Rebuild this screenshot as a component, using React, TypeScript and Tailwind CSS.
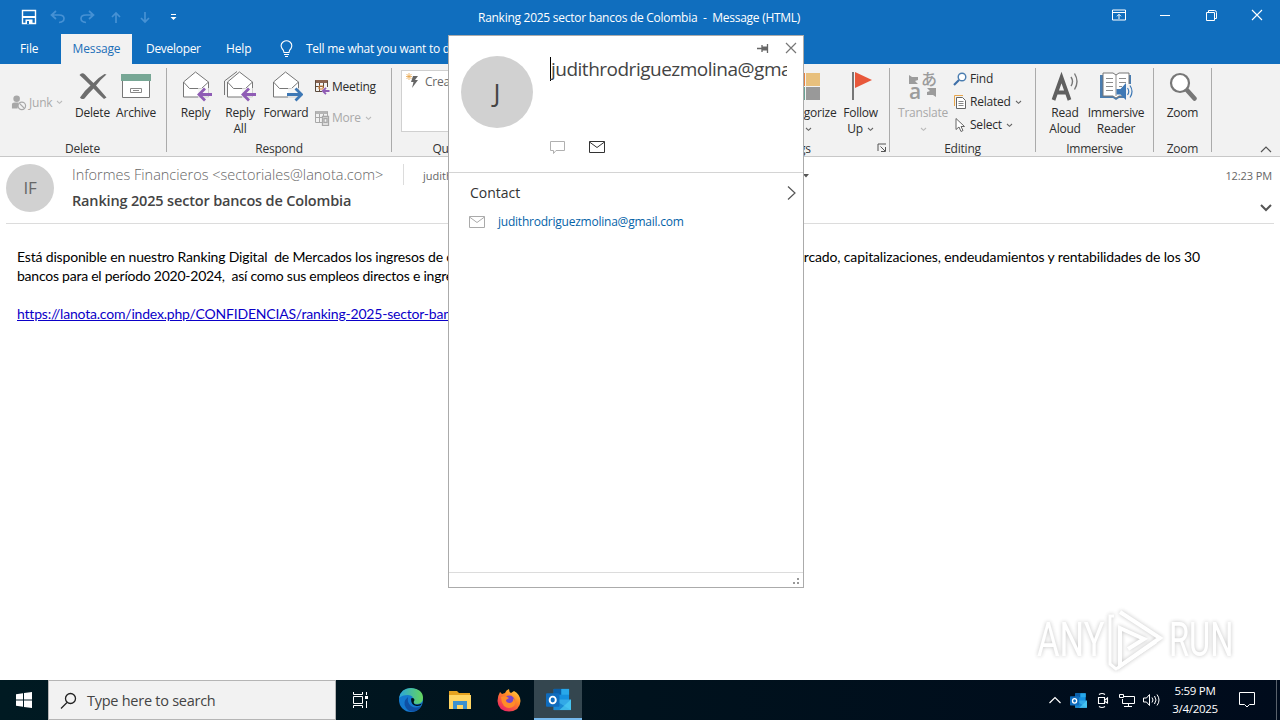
import type { ReactNode } from 'react'

const ui = "font-['Open_Sans','Noto_Sans',sans-serif]"

function Chevron({ className = 'text-[#666]' }: { className?: string }) {
  return (
    <svg width="7" height="5" viewBox="0 0 7 5" className={className}>
      <path d="M1 1l2.500 2.300L6 1" fill="none" stroke="currentColor" strokeWidth="1.100" />
    </svg>
  )
}

function Group({ label, className, children, launcher }: { label: string; className: string; children: ReactNode; launcher?: boolean }) {
  return (
    <div className={`flex shrink-0 flex-col pt-[4px] ${className}`}>
      <div className="flex h-[72px]">{children}</div>
      <div className="flex h-[16px] items-center">
        <span className="flex-1 pt-px text-center leading-[16px]">{label}</span>
        {launcher && (
          <svg width="10" height="10" viewBox="0 0 10 10" className="-ml-[10px] mr-[2px] text-[#555]">
            <path d="M1 8V1h8M3.500 3.500L8 8M8.500 4v4.500H4" fill="none" stroke="currentColor" />
          </svg>
        )}
      </div>
    </div>
  )
}

function Divider() {
  return <div className="mt-[4px] h-[84px] w-px shrink-0 bg-[#ababab]" />
}

function BigButton({ icon, lines, className, chevron, muted }: { icon: ReactNode; lines: string[]; className: string; chevron?: boolean; muted?: boolean }) {
  return (
    <div className={`flex shrink-0 flex-col items-center ${muted ? 'text-[#a9a9a9]' : 'text-[#2b2b2b]'} ${className}`}>
      <div className="flex h-[37px] items-center justify-center pb-px">{icon}</div>
      {lines.map((line, i) => (
        <div key={line} className="flex h-[16px] items-center gap-[4px] whitespace-nowrap leading-[16px]">
          {line}
          {chevron && i === 1 && <Chevron />}
        </div>
      ))}
      {chevron && lines.length === 1 && (
        <div className="flex h-[16px] items-center">
          <Chevron className={muted ? 'text-[#bbb]' : 'text-[#666]'} />
        </div>
      )}
    </div>
  )
}

function SmallButton({ icon, label, chevron, muted }: { icon: ReactNode; label: string; chevron?: boolean; muted?: boolean }) {
  return (
    <div className={`flex items-center gap-[2px] whitespace-nowrap ${muted ? 'text-[#a9a9a9]' : 'text-[#2b2b2b]'}`}>
      <span className="flex w-[16px] shrink-0 justify-center">{icon}</span>
      <span>{label}</span>
      {chevron && <span className="pl-[2px]"><Chevron className={muted ? 'text-[#bbb]' : 'text-[#666]'} /></span>}
    </div>
  )
}

function Letter({ arrow, all }: { arrow: 'left' | 'right'; all?: boolean }) {
  return (
    <svg width="34" height="34" viewBox="0 0 34 34" fill="none">
      {all && <path d="M1.500 26V12L14 2.500" stroke="#777" />}
      <path d="M4.500 13L16.500 3l13 10v15h-25z" fill="#fff" stroke="#777" />
      <path d="M4.500 13l6 6.500h12l7-6.500" stroke="#777" />
      <path d="M19 19h15v12H19z" fill="#f2f2f2" opacity=".7" />
      {arrow === 'left' ? (
        <path d="M33 25.500H20M26 19.500l-6 6 6 6" stroke="#8f5cb5" strokeWidth="2.800" />
      ) : (
        <path d="M18 25.500h14M26.500 19.500l6 6-6 6" stroke="#3e78b5" strokeWidth="2.800" />
      )}
    </svg>
  )
}

function JunkIcon() {
  return (
    <svg width="17" height="17" viewBox="0 0 17 17">
      <circle cx="6" cy="4.500" r="3.500" fill="#a8a8a8" />
      <path d="M1 15V11q0-2.500 3-2.500h4L7 15z" fill="#a8a8a8" />
      <circle cx="11.500" cy="12" r="4" fill="#f2f2f2" stroke="#a8a8a8" strokeWidth="1.300" />
      <path d="M9 9.500l5 5" stroke="#a8a8a8" strokeWidth="1.300" />
    </svg>
  )
}

function DeleteIcon() {
  return (
    <svg width="30" height="30" viewBox="0 0 30 30">
      <path d="M1.500 4Q4 1 7 3.500Q11 8 15.500 12Q21 6 26.500 3L28.500 3.500Q22 9 18 14.500Q23 20 28.500 26.500L26 28Q20 22.500 15.500 17.500Q10 23 6.500 27.500Q3.500 29 2 26.500Q6 20 12.500 14.500Q7 9 1.500 4z" fill="#6d6d6d" />
    </svg>
  )
}

function ArchiveIcon() {
  return (
    <svg width="32" height="28" viewBox="0 0 32 28">
      <path d="M2.500 7.500h27v18h-27z" fill="#fff" stroke="#777" />
      <path d="M1 2h30v7H1z" fill="#77a795" />
      <path d="M10.500 16.500h11v4h-11zM13 18.500h6" fill="none" stroke="#888" />
    </svg>
  )
}

function MeetingIcon({ muted }: { muted?: boolean }) {
  const c = muted ? '#a8a8a8' : '#5b4a3c'
  return (
    <svg width="16" height="16" viewBox="0 0 16 16" fill="none">
      <path d="M1 1h13v3H1z" fill={muted ? '#b5b5b5' : '#8a6350'} />
      <path d="M1.500 1.500v11H8M13.500 2v6M1.500 7.500h8M5.500 4v8M9.500 4v5" stroke={c} />
      {muted ? (
        <path d="M8.500 6.500h6v9h-6zM10 8.500h3v4h-3z" fill="#f2f2f2" stroke={c} strokeWidth="1.300" />
      ) : (
        <g>
          <path d="M5 7h4v3H5z" stroke="#d9843b" />
          <path d="M15.500 12H9M12 8.800L8.800 12l3.200 3.200" stroke="#8f5cb5" strokeWidth="1.800" />
        </g>
      )}
    </svg>
  )
}

function TranslateIcon() {
  return (
    <svg width="30" height="32" viewBox="0 0 30 32">
      <text x="13" y="15" fontSize="16" fill="#9c9c9c" fontWeight="500" fontFamily="'Noto Sans CJK JP', sans-serif">あ</text>
      <text x="1" y="29" fontSize="21" fill="#9c9c9c" fontWeight="600" fontFamily="'Open Sans', sans-serif">a</text>
      <path d="M1 5l3 2h6v3L7 11l3 3H1zM28 18v9l-3-2h-6v-3l3-1-3-3z" fill="#9c9c9c" />
    </svg>
  )
}

function ReaderIcon() {
  return (
    <svg width="34" height="32" viewBox="0 0 34 32" fill="none">
      <path d="M1 5h3v21h11l2 2 2-2h11V5h2v23H20l-3 2-3-2H1z" fill="#4a7db0" />
      <path d="M4 3h10l3 2 3-2h10v23H20l-3 2-3-2H4z" fill="#fff" stroke="#777" />
      <path d="M17 5v21M7 8.500h7M7 12.500h7M7 16.500h7M7 20.500h7M20 8.500h7M20 12.500h7M20 16.500h3" stroke="#8c8c8c" />
      <path d="M25 14h9v16h-9z" fill="#f2f2f2" />
      <path d="M17.500 19h4l5.500-6v17l-5.500-5.500h-4z" fill="#3e78b5" />
      <path d="M28.500 18q2.500 3.500 0 7M31 15.500q4 6 0 12" stroke="#3e78b5" strokeWidth="1.200" />
    </svg>
  )
}

function MailIcon({ className }: { className: string }) {
  return (
    <svg width="16" height="12" viewBox="0 0 16 12" className={className}>
      <path d="M.5.500h15v11H.5zM.5 1L8 6.500 15.500 1" fill="none" stroke="currentColor" />
    </svg>
  )
}

function OutlookIcon({ size }: { size: number }) {
  return (
    <svg width={size} height={size} viewBox="0 0 26 24">
      <path d="M8 1h16v12H8z" fill="#1490df" />
      <path d="M8 1h8v6H8z" fill="#0a5ea8" />
      <path d="M16 1h8v6h-8z" fill="#28a8ea" />
      <path d="M8 12h18v11H8z" fill="#32a9e7" />
      <path d="M8 12l18 11H8z" fill="#1a8ad4" />
      <path d="M26 12v11H14z" fill="#50d1f5" opacity=".65" />
      <rect x="0" y="5.500" width="14" height="14" rx="1" fill="#0f6cbd" />
      <ellipse cx="7" cy="12.500" rx="3.200" ry="3.500" fill="none" stroke="#fff" strokeWidth="2" />
    </svg>
  )
}

function TitleBar() {
  return (
    <div className="flex h-[34px] items-center">
      <div className="flex w-[448px] items-center pl-[21px] text-[#4691d4]">
        <svg width="16" height="16" viewBox="0 0 16 16" className="mr-[13px] text-white">
          <path d="M1.500 1.500h13v13h-13z" fill="none" stroke="currentColor" strokeWidth="1.400" />
          <path d="M2 7h12v2H2zM4.500 10.500h7V15h-7z" fill="currentColor" />
          <path d="M6 12h2v3H6z" fill="#106ebe" />
        </svg>
        <svg width="16" height="14" viewBox="0 0 16 14" className="mr-[13px]">
          <path d="M6 1L1.500 5 6 9M2 5h7q5 0 5 3.500Q14 12 9 12.500" fill="none" stroke="currentColor" strokeWidth="1.700" />
        </svg>
        <svg width="16" height="14" viewBox="0 0 16 14" className="mr-[15px]">
          <path d="M10 1l4.500 4L10 9M14 5H7Q2 5 2 8.500 2 12 7 12.500" fill="none" stroke="currentColor" strokeWidth="1.700" />
        </svg>
        <svg width="12" height="13" viewBox="0 0 12 13" className="mr-[17px]">
          <path d="M6 12V2M2 6l4-4 4 4" fill="none" stroke="currentColor" strokeWidth="1.700" />
        </svg>
        <svg width="12" height="13" viewBox="0 0 12 13" className="mr-[19px]">
          <path d="M6 1v10M2 7l4 4 4-4" fill="none" stroke="currentColor" strokeWidth="1.700" />
        </svg>
        <svg width="7" height="7" viewBox="0 0 7 7" className="text-white">
          <path d="M1 0h5v1H1zM.5 3h6l-3 3z" fill="currentColor" />
        </svg>
      </div>
      <span className="ml-[30px] w-[634px] whitespace-pre pt-[2px] tracking-[-0.27px]">Ranking 2025 sector bancos de Colombia  -  Message (HTML)</span>
      <div className="flex items-center pb-[4px]">
        <svg width="14" height="12" viewBox="0 0 14 12">
          <path d="M.5 1h13v10H.5zM1 3.500h12M7 10V5.500M5 7.300l2-2 2 2" fill="none" stroke="white" />
        </svg>
        <div className="ml-[34px] h-px w-[10px] bg-white" />
        <svg width="11" height="11" viewBox="0 0 11 11" className="ml-[36px]">
          <path d="M.5 2.500h8v8h-8zM2.500 2.500v-2h6q2 0 2 2v6h-2" fill="none" stroke="white" />
        </svg>
        <svg width="12" height="12" viewBox="0 0 12 12" className="ml-[34px]">
          <path d="M1 1l10 10M11 1L1 11" stroke="white" strokeWidth="1.100" />
        </svg>
      </div>
    </div>
  )
}

function Ribbon() {
  return (
    <div className="flex h-[93px] border-b border-[#c8c8c8] bg-[#f2f2f2] text-[#333] tracking-[-0.22px]">
      <Group label="Delete" className="w-[165px]">
        <div className="flex w-[71px] items-center pb-[3px] pl-[11px]">
          <SmallButton icon={<JunkIcon />} label="Junk" chevron muted />
        </div>
        <BigButton className="w-[43px]" icon={<DeleteIcon />} lines={['Delete']} />
        <BigButton className="w-[44px]" icon={<ArchiveIcon />} lines={['Archive']} />
      </Group>
      <div className="w-px" />
      <Divider />
      <Group label="Respond" className="w-[224px]">
        <BigButton className="ml-[6px] w-[45px]" icon={<Letter arrow="left" />} lines={['Reply']} />
        <BigButton className="w-[44px]" icon={<Letter arrow="left" all />} lines={['Reply', 'All']} />
        <BigButton className="w-[48px]" icon={<Letter arrow="right" />} lines={['Forward']} />
        <div className="flex flex-col gap-[15px] pl-[4px] pt-[11px] leading-[16px]">
          <SmallButton icon={<MeetingIcon />} label="Meeting" />
          <SmallButton icon={<MeetingIcon muted />} label="More" chevron muted />
        </div>
      </Group>
      <Divider />
      <Group label="Quick Steps" className="w-[144px]">
        <div className="ml-[9px] mt-[2px] flex h-[62px] w-[128px] gap-[6px] border border-[#d0d0d0] bg-white pl-[3px] pt-[2px] leading-[18px] text-[#666]">
          <svg width="14" height="16" viewBox="0 0 14 16" className="shrink-0">
            <path d="M8 3h5l-3 4h3l-6 8 1.500-6H6z" fill="#666" />
            <path d="M4 0v7M1 3.500h6M1.500 1l5 5M6.500 1l-5 5" stroke="#e8a64c" strokeWidth=".8" />
          </svg>
          Create New
        </div>
      </Group>
      <Divider />
      <div className="w-[172px]" />
      <Divider />
      <Group label="Tags" className="w-[179px]" launcher>
        <BigButton
          className="ml-[67px] w-[62px]"
          chevron
          icon={
            <svg width="30" height="29" viewBox="0 0 30 29" className="-ml-[4px]">
              <path d="M0 1h14v13H0z" fill="#b779b5" />
              <path d="M0 15h14v13H0z" fill="#5b8fc7" />
              <path d="M7 1h7v13H7z" fill="#e7803c" />
              <path d="M15 1h14v13H15z" fill="#e8c07d" />
              <path d="M7 15h7v13H7z" fill="#67a394" />
              <path d="M15 15h14v13H15z" fill="#999" />
            </svg>
          }
          lines={['Categorize']}
        />
        <BigButton
          className="w-[43px]"
          chevron
          icon={
            <svg width="22" height="30" viewBox="0 0 22 30" className="ml-[2px]">
              <path d="M1 1h2v28H1z" fill="#777" />
              <path d="M4 1l17 8-17 8z" fill="#e8583b" />
            </svg>
          }
          lines={['Follow', 'Up']}
        />
      </Group>
      <Divider />
      <Group label="Editing" className="w-[145px]">
        <BigButton className="ml-[8px] w-[50px]" chevron muted icon={<TranslateIcon />} lines={['Translate']} />
        <div className="flex flex-col gap-[7px] pl-[4px] pt-[3px] leading-[16px]">
          <SmallButton
            icon={
              <svg width="14" height="14" viewBox="0 0 14 14">
                <circle cx="9" cy="5" r="3.800" fill="#fff" stroke="#4a7db0" strokeWidth="1.400" />
                <path d="M6 8l-5 5" stroke="#3e6fa8" strokeWidth="2.200" />
              </svg>
            }
            label="Find"
          />
          <SmallButton
            icon={
              <svg width="14" height="16" viewBox="0 0 14 16" fill="none">
                <path d="M1.500 12V1.500H10" stroke="#e8a64c" />
                <path d="M3.500 3.500h6l3 3v8h-9z" fill="#fff" stroke="#666" />
                <path d="M5.500 7.500h5M5.500 9.500h5M5.500 11.500h5" stroke="#888" />
              </svg>
            }
            label="Related"
            chevron
          />
          <SmallButton
            icon={
              <svg width="12" height="16" viewBox="0 0 12 16">
                <path d="M2 1.500v11l3-2.500 2 4.500 2-1-2-4h3.500z" fill="#fff" stroke="#666" />
              </svg>
            }
            label="Select"
            chevron
          />
        </div>
      </Group>
      <Divider />
      <Group label="Immersive" className="w-[117px]">
        <BigButton
          className="ml-[7px] w-[44px]"
          icon={
            <svg width="30" height="32" viewBox="0 0 30 32">
              <path d="M3.500 30L11.500 7.500l8 22.500M6.500 22.500h10" fill="none" stroke="#5f5f5f" strokeWidth="3.800" />
              <path d="M21 7q3 4.500 0 9M24.500 3.500q5 8 0 16" fill="none" stroke="#777" strokeWidth="1.400" />
            </svg>
          }
          lines={['Read', 'Aloud']}
        />
        <BigButton className="w-[58px]" icon={<ReaderIcon />} lines={['Immersive', 'Reader']} />
      </Group>
      <Divider />
      <Group label="Zoom" className="w-[57px]">
        <BigButton
          className="w-[57px]"
          icon={
            <svg width="28" height="29" viewBox="0 0 28 29">
              <path d="M17 17l8.500 9.500" stroke="#777" strokeWidth="4.500" strokeLinecap="round" />
              <circle cx="11" cy="11" r="9" fill="#fff" stroke="#777" strokeWidth="2.200" />
            </svg>
          }
          lines={['Zoom']}
        />
      </Group>
      <Divider />
      <div className="flex flex-1 items-end justify-end pb-[3px] pr-[8px]">
        <svg width="12" height="8" viewBox="0 0 12 8">
          <path d="M1 7l5-5 5 5" fill="none" stroke="#555" strokeWidth="1.200" />
        </svg>
      </div>
    </div>
  )
}

function MessageHeader() {
  return (
    <div className="mx-[6px] flex h-[67px] border-b border-[#dcdcdc] text-[#666]">
      <div className="mt-[7px] flex size-[48px] items-center justify-center rounded-full bg-[#d1d1d1] text-[17px] tracking-[-0.3px]">IF</div>
      <div className="ml-[18px] w-[331px]">
        <div className="mt-[6px] whitespace-nowrap text-[14.500px] font-light leading-[24px]">Informes Financieros &lt;sectoriales@lanota.com&gt;</div>
        <div className="mt-[2px] whitespace-nowrap text-[14.500px] font-semibold leading-[24px] tracking-[-0.16px] text-[#444]">Ranking 2025 sector bancos de Colombia</div>
      </div>
      <div className="mt-[7px] h-[21px] w-px bg-[#dcdcdc]" />
      <div className="ml-[19px] mt-[10px] flex h-[18px] w-[386px] items-center justify-between text-[11px]">
        judithrodriguezmolina@gmail.com
        <svg width="6" height="4" viewBox="0 0 6 4">
          <path d="M0 0h6L3 3.500z" fill="#555" />
        </svg>
      </div>
      <div className="flex flex-1 flex-col items-end pr-[2px] pt-[10px]">
        <div className="text-[11px] leading-[18px] tracking-[-0.1px]">12:23 PM</div>
        <svg width="12" height="8" viewBox="0 0 12 8" className="mt-[19px]">
          <path d="M1 1l5 5 5-5" fill="none" stroke="#555" strokeWidth="2" />
        </svg>
      </div>
    </div>
  )
}

function ContactCard() {
  return (
    <div className="absolute left-[448px] top-[35px] flex h-[553px] w-[356px] flex-col border border-[#ababab] bg-white text-[#444]">
      <div className="flex h-[137px] border-b border-[#d4d4d4]">
        <div className="ml-[12px] mt-[20px] flex size-[72px] items-center justify-center rounded-full bg-[#d1d1d1] text-[26px]">J</div>
        <div className="ml-[17px] w-[237px]">
          <div className="-mr-[10px] mt-[6px] flex h-[12px] items-center justify-end">
            <svg width="12" height="9" viewBox="0 0 12 9" className="shrink-0">
              <path d="M0 4.500h5M5 1v7M10.500 0v9" fill="none" stroke="#666" strokeWidth="1.300" />
              <path d="M5 2.500h5v4H5z" fill="#666" />
            </svg>
            <svg width="12" height="12" viewBox="0 0 12 12" className="ml-[16px] shrink-0">
              <path d="M1 1l10 10M11 1L1 11" stroke="#777" strokeWidth="1.200" />
            </svg>
          </div>
          <div className="mt-px flex h-[27px] items-center overflow-hidden">
            <div className="h-[24px] w-px shrink-0 bg-black" />
            <div className="whitespace-nowrap text-[19px] leading-[26px] tracking-[-0.5px]">judithrodriguezmolina@gmail.com</div>
          </div>
          <div className="mt-[58px] flex items-center gap-[24px]">
            <svg width="15" height="14" viewBox="0 0 15 14">
              <path d="M.5 1.500h14v9H6l-2.500 3v-3h-3z" fill="none" stroke="#b0b0b0" />
            </svg>
            <MailIcon className="text-[#333]" />
          </div>
        </div>
      </div>
      <div className="flex h-[40px] items-center justify-between pl-[21px] pr-[6px] text-[14px] text-[#333]">
        <span className="pb-[2px]">Contact</span>
        <svg width="10" height="16" viewBox="0 0 10 16">
          <path d="M1 1.500L8 8l-7 6.500" fill="none" stroke="#555" strokeWidth="1.200" />
        </svg>
      </div>
      <div className="flex h-[18px] items-center gap-[13px] pl-[20px] tracking-[-0.23px] text-[#0563a8]">
        <MailIcon className="text-[#aaa]" />
        judithrodriguezmolina@gmail.com
      </div>
      <div className="mt-auto flex h-[15px] items-end justify-end border-t border-[#dcdcdc] pb-[3px] pr-[4px]">
        <svg width="6" height="6" viewBox="0 0 6 6">
          <path d="M4 0h2v2H4zM0 4h2v2H0zM4 4h2v2H4z" fill="#999" />
        </svg>
      </div>
    </div>
  )
}

function Watermark() {
  return (
    <div className="absolute left-[1037px] top-[606px] flex h-[68px] w-[200px] items-center text-white opacity-80 drop-shadow-[0_0_2px_rgba(0,0,0,0.3)]">
      <span className="w-[68px] origin-left scale-x-[0.72] font-['Roboto',sans-serif] text-[48px] leading-none">ANY</span>
      <svg width="58" height="64" viewBox="0 0 58 64" className="ml-px">
        <path d="M14 4l40 26-40 28V20l24 11-16 10" fill="none" stroke="white" strokeWidth="4" />
        <path d="M8 8H4v48l6 5 40-27" fill="none" stroke="white" strokeWidth="3" />
      </svg>
      <span className="ml-[5px] w-[64px] origin-left scale-x-[0.68] font-['Roboto',sans-serif] text-[48px] leading-none">RUN</span>
    </div>
  )
}

function Taskbar() {
  return (
    <div className="flex h-[40px] items-center bg-linear-to-r from-[#001a22] via-[#00121d] to-[#000b1c] text-white">
      <div className="flex w-[48px] justify-center">
        <svg width="16" height="16" viewBox="0 0 16 16">
          <path d="M0 2.200l7-.9v6.200H0zM8 1.100L16 0v7.500H8zM0 8.500h7v6.300l-7-1zM8 8.500h8V16l-8-1.100z" fill="white" />
        </svg>
      </div>
      <div className="flex h-[40px] w-[288px] items-center border border-[#b5b5b5] bg-[#f2f2f2] pl-[11px] text-[14.500px] tracking-[-0.26px] text-[#444]">
        <svg width="17" height="17" viewBox="0 0 17 17" className="mr-[10px]">
          <path d="M7 10.500L1 16.500" stroke="#222" strokeWidth="1.300" />
          <circle cx="10.500" cy="6.500" r="5" fill="none" stroke="#222" strokeWidth="1.300" />
        </svg>
        <span className="pt-px">Type here to search</span>
      </div>
      <div className="flex w-[48px] justify-center">
        <svg width="17" height="16" viewBox="0 0 17 16">
          <path d="M1.500 0v2.500h9V0M1.500 16v-2.500h9V16M1.500 4.500h9v7h-9zM14.500 0v3M14.500 9v7" fill="none" stroke="white" />
          <path d="M13 4h3v3h-3z" fill="white" />
        </svg>
      </div>
      <div className="ml-[2px] flex w-[50px] justify-center">
        <svg width="24" height="24" viewBox="0 0 24 24">
          <defs>
            <linearGradient id="edgeTop" x1="0" x2="1">
              <stop offset="0" stopColor="#2aa5dc" />
              <stop offset="1" stopColor="#65d65c" />
            </linearGradient>
          </defs>
          <circle cx="12" cy="12" r="12" fill="#1479cf" />
          <path d="M0 10Q2 0 12 0q12 1 12 10 0 6-7 6-4 0-3-3 1-6-5-6-6 0-9 3z" fill="url(#edgeTop)" />
          <path d="M9 9Q3 14 7 20q3 4 7 3.500Q20 23 22 18q-5 3-10 0-4-3-3-9z" fill="#0f50a5" />
          <path d="M12 10.500q3-1.500 3.500 1.500-2 3 1 4.500 3.500.500 6.500-1-1.500 3-5.500 2.500-5.500-.500-5.500-7.500z" fill="#00131d" />
        </svg>
      </div>
      <div className="flex w-[48px] justify-center">
        <svg width="22" height="20" viewBox="0 0 22 20">
          <path d="M0 1h8l2 2h11v5H0z" fill="#e5a21f" />
          <path d="M0 5h22v14H0z" fill="#ffd563" />
          <path d="M4 11h14v8h-4v-4H8v4H4z" fill="#3c91cf" />
        </svg>
      </div>
      <div className="flex w-[50px] justify-center">
        <svg width="24" height="24" viewBox="0 0 24 24">
          <defs>
            <linearGradient id="fox" x1="1" x2=".3" y2="1">
              <stop offset="0" stopColor="#ffe24a" />
              <stop offset=".45" stopColor="#ff8a25" />
              <stop offset="1" stopColor="#ec2462" />
            </linearGradient>
          </defs>
          <path d="M3 4l2 2 3-1q1-3 4-4 0 3 2 4l3-2q6 3 6.500 10Q23 23 12 23.500 1 23 .5 13 .5 8 3 4z" fill="url(#fox)" />
          <circle cx="12.500" cy="12.500" r="5" fill="#7a45c9" />
          <path d="M4 9q4-2 8 1l-3 2q0 3 4 3 4-1 3-5 4 4 1 8-5 4-10 0-3-4-3-9z" fill="#ff8c28" />
        </svg>
      </div>
      <div className="flex h-[40px] w-[48px] items-center justify-center border-b-2 border-[#76b9ed] bg-[#34464f]">
        <OutlookIcon size={25} />
      </div>
      <div className="ml-auto flex items-center">
        <svg width="12" height="8" viewBox="0 0 12 8">
          <path d="M.5 7L6 1.500 11.500 7" fill="none" stroke="white" strokeWidth="1.200" />
        </svg>
        <span className="ml-[9px]"><OutlookIcon size={17} /></span>
        <svg width="12" height="17" viewBox="0 0 12 17" className="ml-[10px]">
          <path d="M1.500 5.500h6v6h-6zM8 8l2.500-2v5L8 9.500M2 2.500Q5 .5 8 2.500M2 14.500q3 2 6 0" fill="none" stroke="white" strokeWidth="1.100" />
        </svg>
        <svg width="16" height="15" viewBox="0 0 16 15" className="ml-[10px]">
          <path d="M5 3.500h10.500v7H3.500V6M.5 1.500h4v3h-4zM9.500 11v2.500M5 13.500h8" fill="none" stroke="white" />
        </svg>
        <svg width="17" height="14" viewBox="0 0 17 14" className="ml-[8px]">
          <path d="M.5 5h3l3-3.500v11L3.500 9h-3zM9 4.500q2 2.500 0 5M11.500 3q3 4 0 8M14 1.500q4 5.500 0 11" fill="none" stroke="white" />
        </svg>
        <div className="ml-[2px] flex w-[66px] flex-col items-center text-[11.500px] leading-[18px] tracking-[-0.3px]">
          <span>5:59 PM</span>
          <span>3/4/2025</span>
        </div>
        <svg width="16" height="16" viewBox="0 0 16 16" className="ml-[11px] mr-[21px]">
          <path d="M.5.500h15v12h-5L8 15l-2.500-2.500h-5z" fill="none" stroke="white" />
        </svg>
        <div className="h-[40px] w-[4px] border-l border-[#59616b]" />
      </div>
    </div>
  )
}

export default function App() {
  return (
    <div className={`relative flex h-[720px] w-[1280px] flex-col overflow-hidden bg-white text-[12px] ${ui}`}>
      <div className="h-[64px] bg-[#106ebe] text-white">
        <TitleBar />
        <div className="flex h-[30px] items-center whitespace-nowrap tracking-[-0.15px]">
          <span className="w-[61px] pl-[20px]">File</span>
          <span className="flex h-[30px] w-[71px] items-center justify-center bg-[#f2f2f2] text-[#1c6fb8]">Message</span>
          <span className="ml-[14px] w-[80px] tracking-[-0.3px]">Developer</span>
          <span className="w-[53px]">Help</span>
          <svg width="15" height="18" viewBox="0 0 15 18" className="mr-[12px]">
            <path d="M5 12.500Q5 10.500 3 8.500.8 4.500 4 2q3.500-2.500 7 0 3 2.500 1 6.500-2 2-2 4zM5 14.500h5M6 16.500h3" fill="none" stroke="white" strokeWidth="1.100" />
          </svg>
          <span className="tracking-[-0.26px]">Tell me what you want to do</span>
        </div>
      </div>
      <Ribbon />
      <MessageHeader />
      <div className="flex-1 px-[17px] pt-[23px] font-['Lato',sans-serif] text-[14px] leading-[19px] text-black">
        <div className="flex justify-between pr-[63px]">
          <p className="w-[431px] overflow-hidden whitespace-pre tracking-[-0.17px]">Está disponible en nuestro Ranking Digital  de Mercados los ingresos de corresponsales</p>
          <p className="whitespace-pre tracking-[-0.13px]">mercado, capitalizaciones, endeudamientos y rentabilidades de los 30</p>
        </div>
        <p className="w-[431px] overflow-hidden whitespace-pre tracking-[-0.24px]">bancos para el período 2020-2024,  así como sus empleos directos e ingresos</p>
        <p className="mt-[19px] w-[431px] overflow-hidden whitespace-pre tracking-[-0.2px] text-[#0b00c8] underline">https://lanota.com/index.php/CONFIDENCIAS/ranking-2025-sector-bancos</p>
      </div>
      <Taskbar />
      <ContactCard />
      <Watermark />
    </div>
  )
}
